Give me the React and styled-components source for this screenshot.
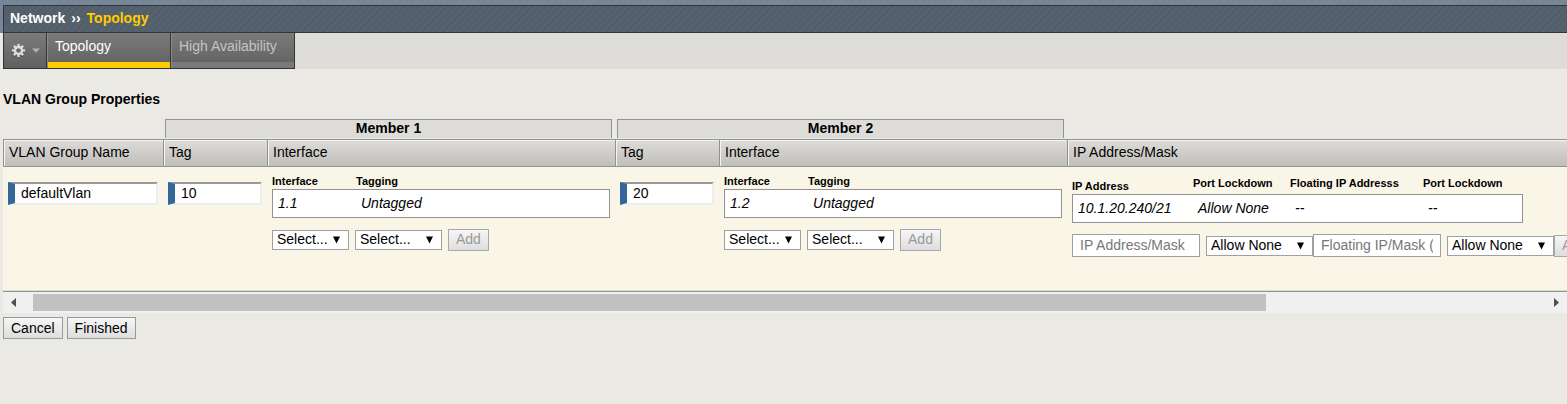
import React, { useRef } from "react";
import styled, { createGlobalStyle, css } from "styled-components";

const GlobalStyle = createGlobalStyle`
  * { box-sizing: border-box; }
  body {
    margin: 0;
    background: #eae9e4;
    color: #000;
    font: 14px/16px "Liberation Sans", Arial, Helvetica, sans-serif;
  }
  input, select, button { font: inherit; color: inherit; margin: 0; border-radius: 0; }
`;

const stripes = css`
  background-image: repeating-linear-gradient(
    135deg,
    rgba(255, 255, 255, 0.02) 0 2px,
    rgba(0, 0, 0, 0.01) 2px 5px
  );
`;

const Masthead = styled.header`
  padding: 5px 0 0 3px;
  background-color: #768798;
  ${stripes}
`;

const Breadcrumb = styled.nav`
  display: flex;
  align-items: center;
  gap: 6px;
  height: 28px;
  padding: 0 6px 2px;
  border: 1px solid #32353a;
  border-right: 0;
  background-color: #535f6b;
  ${stripes}
  color: #fff;
  font-weight: bold;
`;

const CrumbLink = styled.a`
  color: #fff;
  text-decoration: none;
`;

const CurrentCrumb = styled.span`
  color: #fc0;
`;

const TabBar = styled.nav`
  display: flex;
  height: 36px;
  margin-left: 3px;
  background: #dedcd8;
`;

const tabSurface = css`
  border: 1px solid #333;
  border-width: 0 1px 1px 0;
  background: linear-gradient(#7b7b7b, #606060);
`;

const GearButton = styled.button`
  ${tabSurface}
  display: flex;
  align-items: center;
  gap: 6px;
  width: 44px;
  padding: 0 0 0 7px;
  border-left-width: 1px;
`;

const Tab = styled.a`
  ${tabSurface}
  width: 124px;
  padding: 5px 8px 0;
  box-shadow: inset 1px 0 #8c8c8c, inset 0 -6px ${(p) => (p.$active ? "#fc0" : "#7a7a7a")};
  color: ${(p) => (p.$active ? "#fff" : "#c4c4c4")};
  text-decoration: none;
`;

const Content = styled.main`
  padding: 22px 0 0 3px;
`;

const Title = styled.h1`
  margin: 0 0 12px;
  font-size: 14px;
  line-height: 16px;
`;

const Viewport = styled.div`
  overflow: hidden;
  border-bottom: 1px solid #929292;
`;

const VlanTable = styled.table`
  width: 1916px;
  table-layout: fixed;
  border-collapse: separate;
  border-spacing: 0;
`;

const Col = styled.col`
  width: ${(p) => (p.$w ? `${p.$w}px` : "auto")};
`;

const GroupHead = styled.th`
  height: 20px;
  padding: 0 3px 1px 2px;
`;

const GroupLabel = styled.div`
  height: 19px;
  border: 1px solid #929292;
  border-bottom: 0;
  background: #dedcd8;
  line-height: 17px;
`;

const ColumnHead = styled.th`
  height: 28px;
  padding: 0 5px 2px;
  border: 1px solid #929292;
  border-right: 0;
  background: linear-gradient(#dedcd9, #bfbeba);
  box-shadow: inset 1px 1px #f4f4f2;
  font-weight: normal;
  text-align: left;
`;

const Cell = styled.td`
  height: 124px;
  padding: ${(p) => (p.$field ? "15px" : p.$wide ? "10px" : "5px")} 5px 0;
  border-bottom: 1px solid #dcdbd6;
  background: #faf6e7;
  vertical-align: top;
`;

const RequiredInput = styled.input`
  display: block;
  width: 100%;
  height: 23px;
  padding: 0 6px 2px;
  border: 2px solid #eee;
  border-top-color: #999;
  border-left: 7px solid #369;
  background: #fff;
`;

const EntryTable = styled.table`
  width: ${(p) => (p.$width ? `${p.$width}px` : "100%")};
  table-layout: fixed;
  border-collapse: separate;
  border-spacing: 0;
`;

const EntryHead = styled.th`
  height: 17px;
  padding: ${(p) => (p.$raised ? "0 0 5px" : "0 0 2px")};
  font-size: 11px;
  line-height: 12px;
  text-align: left;
  vertical-align: bottom;
  white-space: nowrap;
`;

const EntryCell = styled.td`
  height: 29px;
  padding: 0 5px 1px;
  border: 1px solid #929292;
  border-width: 1px 0;
  background: #fff;
  font-style: italic;
  white-space: nowrap;
  &:first-child { border-left-width: 1px; }
  &:last-child { border-right-width: 1px; }
`;

const Controls = styled.div`
  display: flex;
  align-items: center;
  gap: ${(p) => (p.$paired ? "0" : "6px")};
  margin-top: 11px;
`;

const Pair = styled.div`
  display: flex;
  align-items: center;
  gap: 6px;
`;

const SelectBox = styled.span`
  display: grid;
  width: ${(p) => p.$width}px;
  align-items: center;
  & > * { grid-area: 1 / 1; }
  & > svg { justify-self: end; margin-right: 9px; pointer-events: none; }
`;

const NativeSelect = styled.select`
  appearance: none;
  width: 100%;
  height: 20px;
  padding: 0 4px 2px;
  border: 1px solid #a0a0a0;
  background: #fff;
  line-height: 16px;
`;

const AddressInput = styled.input`
  width: 128px;
  height: 23px;
  padding: 0 7px 1px;
  border: 1px solid #a0a0a0;
  background: #fff;
  &::placeholder { color: #777; opacity: 1; }
`;

const Button = styled.button`
  flex: none;
  height: 22px;
  padding: 0 7px 1px;
  border: 1px solid #999;
  background: linear-gradient(#f6f6f6, #dedede);
  line-height: 16px;
  &:disabled { padding-bottom: 2px; color: #999; border-color: #a8a8a8; }
`;

const ScrollBar = styled.div`
  display: flex;
  align-items: center;
  height: 21px;
  background: #f0f0f0;
`;

const ScrollButton = styled.button`
  display: flex;
  align-items: center;
  flex: 0 0 ${(p) => (p.$back ? "30px" : "21px")};
  height: 100%;
  padding: 0 8px;
  border: 0;
  background: none;
`;

const ScrollTrack = styled.div`
  flex: 1;
`;

const ScrollThumb = styled.div`
  width: 81.5%;
  height: 17px;
  background: #c1c1c1;
`;

const Actions = styled.div`
  display: flex;
  gap: 4px;
  margin-top: 4px;
`;

const teeth = [0, 45, 90, 135, 180, 225, 270, 315];

function Gear() {
  return (
    <svg width="15" height="16" viewBox="-7.5 -7.5 15 16" aria-hidden="true">
      <g fill="#444" transform="translate(0 1)" opacity="0.6">
        <circle r="4.8" />
        {teeth.map((a) => <rect key={a} x="-1.3" y="-6.7" width="2.6" height="3" transform={`rotate(${a})`} />)}
      </g>
      <circle r="3.4" fill="none" stroke="#dcdcdc" strokeWidth="2.6" />
      {teeth.map((a) => <rect key={a} x="-1.2" y="-6.6" width="2.4" height="2.8" fill="#dcdcdc" transform={`rotate(${a})`} />)}
      <circle r="2.1" fill="#666" />
    </svg>
  );
}

function Caret() {
  return (
    <svg width="8" height="5" viewBox="0 0 8 5" aria-hidden="true">
      <path d="M0 0.5h8L4 4.5z" fill="#b5b5b5" />
    </svg>
  );
}

function Dropdown({ width, label, value }) {
  return (
    <SelectBox $width={width}>
      <NativeSelect aria-label={label}>
        <option>{value}</option>
      </NativeSelect>
      <svg width="7" height="8" viewBox="0 0 7 8" aria-hidden="true">
        <path d="M0 0.5h7L3.5 7.5z" fill="#000" />
      </svg>
    </SelectBox>
  );
}

function Interfaces({ name }) {
  return (
    <Cell>
      <EntryTable>
        <colgroup><Col $w={84} /><Col /></colgroup>
        <thead>
          <tr><EntryHead>Interface</EntryHead><EntryHead>Tagging</EntryHead></tr>
        </thead>
        <tbody>
          <tr><EntryCell>{name}</EntryCell><EntryCell>Untagged</EntryCell></tr>
        </tbody>
      </EntryTable>
      <Controls>
        <Dropdown width={77} label="Interface" value="Select..." />
        <Dropdown width={87} label="Tagging" value="Select..." />
        <Button type="button" disabled>Add</Button>
      </Controls>
    </Cell>
  );
}

function Addresses() {
  return (
    <Cell $wide>
      <EntryTable $width={451}>
        <colgroup><Col $w={121} /><Col $w={97} /><Col $w={133} /><Col /></colgroup>
        <thead>
          <tr>
            <EntryHead>IP Address</EntryHead>
            <EntryHead $raised>Port Lockdown</EntryHead>
            <EntryHead $raised>Floating IP Addresss</EntryHead>
            <EntryHead $raised>Port Lockdown</EntryHead>
          </tr>
        </thead>
        <tbody>
          <tr>
            <EntryCell>10.1.20.240/21</EntryCell>
            <EntryCell>Allow None</EntryCell>
            <EntryCell>--</EntryCell>
            <EntryCell>--</EntryCell>
          </tr>
        </tbody>
      </EntryTable>
      <Controls $paired>
        <Pair>
          <AddressInput aria-label="IP Address/Mask" placeholder="IP Address/Mask" />
          <Dropdown width={107} label="Port Lockdown" value="Allow None" />
        </Pair>
        <Pair>
          <AddressInput aria-label="Floating IP/Mask" placeholder="Floating IP/Mask (optional)" />
          <Dropdown width={107} label="Floating Port Lockdown" value="Allow None" />
        </Pair>
        <Button type="button" disabled>Add</Button>
      </Controls>
    </Cell>
  );
}

export default function App() {
  const viewport = useRef(null);
  const scroll = (left) => viewport.current.scrollBy({ left });

  return (
    <>
      <GlobalStyle />
      <Masthead>
        <Breadcrumb aria-label="Breadcrumb">
          <CrumbLink href="#network">Network</CrumbLink>
          <span>››</span>
          <CurrentCrumb>Topology</CurrentCrumb>
        </Breadcrumb>
      </Masthead>
      <TabBar>
        <GearButton type="button" aria-label="Options"><Gear /><Caret /></GearButton>
        <Tab href="#topology" $active>Topology</Tab>
        <Tab href="#ha">High Availability</Tab>
      </TabBar>
      <Content>
        <Title>VLAN Group Properties</Title>
        <Viewport ref={viewport}>
          <VlanTable>
            <colgroup>
              <Col $w={160} /><Col $w={104} /><Col $w={348} /><Col $w={104} /><Col $w={348} /><Col />
            </colgroup>
            <thead>
              <tr>
                <td />
                <GroupHead colSpan={2}><GroupLabel>Member 1</GroupLabel></GroupHead>
                <GroupHead colSpan={2}><GroupLabel>Member 2</GroupLabel></GroupHead>
                <td />
              </tr>
              <tr>
                <ColumnHead>VLAN Group Name</ColumnHead>
                <ColumnHead>Tag</ColumnHead>
                <ColumnHead>Interface</ColumnHead>
                <ColumnHead>Tag</ColumnHead>
                <ColumnHead>Interface</ColumnHead>
                <ColumnHead>IP Address/Mask</ColumnHead>
              </tr>
            </thead>
            <tbody>
              <tr>
                <Cell $field><RequiredInput aria-label="VLAN Group Name" defaultValue="defaultVlan" /></Cell>
                <Cell $field><RequiredInput aria-label="Member 1 Tag" defaultValue="10" /></Cell>
                <Interfaces name="1.1" />
                <Cell $field><RequiredInput aria-label="Member 2 Tag" defaultValue="20" /></Cell>
                <Interfaces name="1.2" />
                <Addresses />
              </tr>
            </tbody>
          </VlanTable>
        </Viewport>
        <ScrollBar>
          <ScrollButton type="button" $back aria-label="Scroll left" onClick={() => scroll(-60)}>
            <svg width="5" height="9" viewBox="0 0 5 9" aria-hidden="true"><path d="M5 0v9L0 4.5z" fill="#505050" /></svg>
          </ScrollButton>
          <ScrollTrack><ScrollThumb /></ScrollTrack>
          <ScrollButton type="button" aria-label="Scroll right" onClick={() => scroll(60)}>
            <svg width="5" height="9" viewBox="0 0 5 9" aria-hidden="true"><path d="M0 0v9l5-4.5z" fill="#505050" /></svg>
          </ScrollButton>
        </ScrollBar>
        <Actions>
          <Button type="button">Cancel</Button>
          <Button type="button">Finished</Button>
        </Actions>
      </Content>
    </>
  );
}
